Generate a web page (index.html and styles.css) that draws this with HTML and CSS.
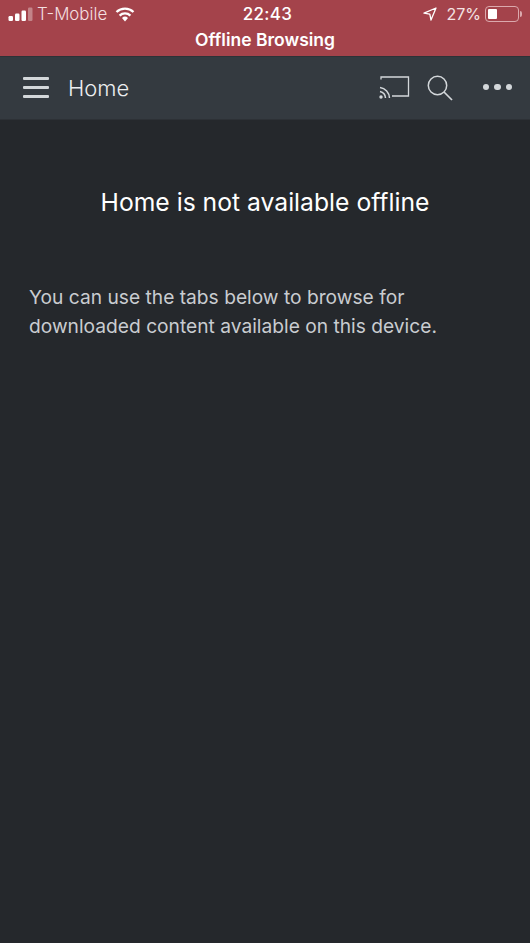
FILE: index.html
```html
<!DOCTYPE html>
<html lang="en">
<head>
    <meta charset="UTF-8">
    <meta name="viewport" content="width=device-width, initial-scale=1.0">
    <title>Home</title>
    <link rel="stylesheet" href="styles.css">
</head>
<body>

    <!-- Status bar + offline banner -->
    <div class="banner">
        <div class="status-row">
            <div class="status-left">
                <svg class="signal" width="25" height="16" viewBox="0 0 25 16">
                    <rect x="0.5" y="10" width="4.5" height="5" rx="1.2" fill="#fff"/>
                    <rect x="7" y="7.5" width="4.5" height="7.5" rx="1.2" fill="#fff"/>
                    <rect x="13.5" y="4.5" width="4.5" height="10.5" rx="1.2" fill="#fff"/>
                    <rect x="20" y="1.5" width="4.5" height="13.5" rx="1.2" fill="#fff" fill-opacity="0.35"/>
                </svg>
                <span class="carrier">T-Mobile</span>
                <svg class="wifi" width="20" height="15" viewBox="0 0 20 15">
                    <path d="M10 14.5 L7 11 A4.4 4.4 0 0 1 13 11 Z" fill="#fff"/>
                    <path d="M4.6 8.6 A7.8 7.8 0 0 1 15.4 8.6 M1.5 5 A12.4 12.4 0 0 1 18.5 5" fill="none" stroke="#fff" stroke-width="2.3"/>
                </svg>
            </div>
            <div class="status-time">22:43</div>
            <div class="status-right">
                <svg class="arrow" width="14" height="14" viewBox="0 0 14 14">
                    <path d="M13 1 L1 6.2 L6.8 7.2 L8 13 Z" fill="none" stroke="#fff" stroke-width="1.3" stroke-linejoin="round"/>
                </svg>
                <span class="battery-pct">27%</span>
                <div class="battery">
                    <div class="battery-fill"></div>
                </div>
                <div class="battery-cap"></div>
            </div>
        </div>
        <div class="banner-title">Offline Browsing</div>
    </div>

    <!-- Toolbar -->
    <div class="toolbar">
        <div class="menu-btn">
            <span></span>
            <span></span>
            <span></span>
        </div>
        <div class="toolbar-title">Home</div>
        <svg class="cast-icon" width="31" height="24" viewBox="0 0 31 24">
            <path d="M2 3.5 V1 H29.5 V20 H13" fill="none" stroke="#d3d7da" stroke-width="1.3"/>
            <path d="M1 11.5 A11 11 0 0 1 10.5 22 M1 15.5 A7 7 0 0 1 6.5 22" fill="none" stroke="#d3d7da" stroke-width="1.5"/>
            <circle cx="2" cy="21" r="1.7" fill="#d3d7da"/>
        </svg>
        <svg class="search-icon" width="26" height="26" viewBox="0 0 26 26">
            <circle cx="10.5" cy="10.5" r="9.2" fill="none" stroke="#d3d7da" stroke-width="1.5"/>
            <path d="M17 17 L25 25" stroke="#d3d7da" stroke-width="1.7"/>
        </svg>
        <div class="more-btn">
            <span></span>
            <span></span>
            <span></span>
        </div>
    </div>

    <!-- Main Content Area -->
    <div class="main-content">
        <h1>Home is not available offline</h1>
        <p>You can use the tabs below to browse for<br>downloaded content available on this device.</p>
    </div>

</body>
</html>
```

FILE: styles.css
```css
* {
    margin: 0;
    padding: 0;
    box-sizing: border-box;
    font-family: Inter, "Liberation Sans", sans-serif;
}

body {
    background: #25282c;
    width: 530px;
    height: 943px;
    overflow: hidden;
    display: flex;
    flex-direction: column;
}

/* Banner */
.banner {
    height: 56px;
    background: #a4434b;
    color: white;
}

.status-row {
    height: 28px;
    padding: 0 8px;
    display: flex;
    align-items: center;
    justify-content: space-between;
    position: relative;
}

.status-left,
.status-right {
    display: flex;
    align-items: center;
}

.signal {
    margin-right: 4px;
}

.carrier {
    font-size: 16.9px;
    font-weight: 300;
    color: #f3dfe0;
    margin-right: 8px;
}

.status-time {
    font-size: 17px;
    font-weight: 500;
    position: absolute;
    left: 5px;
    right: 0;
    text-align: center;
    letter-spacing: 0.3px;
}

.arrow {
    margin-right: 9px;
}

.battery-pct {
    font-size: 16px;
    color: #f5e3e4;
    margin-right: 4px;
}

.battery {
    width: 34px;
    height: 16px;
    border: 1px solid #dba9ad;
    border-radius: 4px;
    padding: 2px;
}

.battery-fill {
    width: 9px;
    height: 100%;
    background: white;
    border-radius: 1px;
}

.battery-cap {
    width: 2px;
    height: 6px;
    background: #dba9ad;
    border-radius: 0 2px 2px 0;
    margin-left: 1px;
}

.banner-title {
    font-size: 17.5px;
    font-weight: 600;
    text-align: center;
    line-height: 24px;
}

/* Toolbar */
.toolbar {
    height: 64px;
    background: #343a40;
    border-top: 1px solid #2d3237;
    border-bottom: 1px solid #2d3136;
    padding: 0 18px 0 23px;
    display: flex;
    align-items: center;
}

.menu-btn {
    width: 26px;
    display: flex;
    flex-direction: column;
    gap: 6px;
    margin-right: 19px;
    margin-bottom: 1px;
}

.menu-btn span {
    height: 3px;
    background: #d3d7da;
    border-radius: 1px;
}

.toolbar-title {
    font-size: 22px;
    font-weight: 300;
    color: #eceef0;
    flex-grow: 1;
}

.cast-icon {
    margin-right: 17px;
}

.search-icon {
    margin-right: 30px;
}

.more-btn {
    display: flex;
    gap: 5px;
    margin-bottom: 2px;
}

.more-btn span {
    width: 6.5px;
    height: 6.5px;
    background: #d3d7da;
    border-radius: 50%;
}

/* Main Content Area */
.main-content {
    flex-grow: 1;
    padding: 0 29px;
}

.main-content h1 {
    font-size: 24.7px;
    font-weight: 400;
    line-height: 32px;
    color: white;
    text-align: center;
    margin-top: 66px;
    margin-bottom: 65px;
}

.main-content p {
    font-size: 19.2px;
    line-height: 29px;
    color: #c9ccd0;
}
```
